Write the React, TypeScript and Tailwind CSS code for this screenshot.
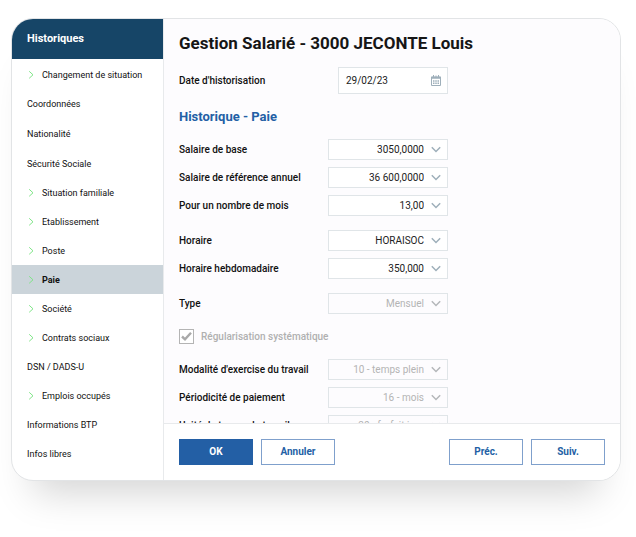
type MenuItem = {
  label: string;
  nested?: boolean;
  active?: boolean;
  spaced?: boolean;
};

const menu: MenuItem[] = [
  { label: "Changement de situation", nested: true },
  { label: "Coordonnées", spaced: true },
  { label: "Nationalité", spaced: true },
  { label: "Sécurité Sociale" },
  { label: "Situation familiale", nested: true },
  { label: "Etablissement", nested: true },
  { label: "Poste", nested: true },
  { label: "Paie", nested: true, active: true },
  { label: "Société", nested: true },
  { label: "Contrats sociaux", nested: true },
  { label: "DSN / DADS-U" },
  { label: "Emplois occupés", nested: true },
  { label: "Informations BTP" },
  { label: "Infos libres" },
];

const MenuLink = ({ label, nested, active, spaced }: MenuItem) => {
  return (
    <li className={spaced ? "mb-px" : ""}>
      <a
        href="#"
        className={`flex h-[29px] items-center pl-[15px] text-[9px] ${
          active ? "bg-[#cbd4da] font-bold text-[#111]" : "text-[#111]"
        }`}
      >
        {nested && (
          <svg
            className="mr-[5px] h-[10px] w-[10px] shrink-0"
            viewBox="0 0 10 10"
            fill="none"
            stroke="#7fe487"
          >
            <path d="M2.2 1.3 6 4.8 2.2 8.3" />
          </svg>
        )}
        {label}
      </a>
    </li>
  );
};

type FieldProps = {
  id: string;
  label: string;
  value: string;
  disabled?: boolean;
};

const SelectField = ({ id, label, value, disabled }: FieldProps) => {
  return (
    <div className="flex items-center justify-between">
      <label htmlFor={id} className="font-medium text-[#111]">
        {label}
      </label>
      <div className="relative">
        <select
          id={id}
          disabled={disabled}
          className={`block h-[21px] w-[120px] appearance-none border border-[#e0e5e8] pr-[23px] pl-2 text-right text-[10px] opacity-100 ${
            disabled ? "bg-[#fdfcfe] text-[#b4b4b4]" : "bg-white text-[#222]"
          }`}
        >
          <option>{value}</option>
        </select>
        <svg
          className={`pointer-events-none absolute top-[7px] right-[7px] h-[7px] w-[10px] ${
            disabled ? "text-[#b4b7ba]" : "text-[#9eafba]"
          }`}
          viewBox="0 0 10 7"
          fill="none"
          stroke="currentColor"
          strokeWidth="1.5"
        >
          <path d="M.8 1.3 5 5.5 9.2 1.3" />
        </svg>
      </div>
    </div>
  );
};

const CalendarIcon = () => {
  return (
    <svg
      className="pointer-events-none absolute top-[8px] right-[7px] h-[11px] w-[10px]"
      viewBox="0 0 10 11"
      fill="none"
      stroke="#9eafba"
    >
      <path d="M.5 2h9v8.5h-9z" />
      <path d="M0 2.8h10" strokeWidth="2" />
      <path d="M2.5 0v2.5M7.5 0v2.5M5 .5v2" />
      <path d="M2 6h6M2 8.2h6" strokeDasharray="1.5 .75" strokeWidth="1.4" />
    </svg>
  );
};

type ButtonProps = {
  label: string;
  primary?: boolean;
};

const Button = ({ label, primary }: ButtonProps) => {
  return (
    <button
      type="button"
      className={`h-[26px] w-[74px] border font-bold ${
        primary
          ? "border-[#235fa5] bg-[#235fa5] text-white"
          : "border-[#7fa0cc] bg-white text-[#235fa5]"
      }`}
    >
      {label}
    </button>
  );
};

const App = () => {
  return (
    <div className="bg-white pt-[18px] pr-[15px] pb-14 pl-[11px] font-['Roboto',sans-serif] text-[10px] leading-[14px]">
      <div className="flex overflow-hidden rounded-[22px] border border-[#e2e4e6] bg-white shadow-[0_34px_36px_-22px_rgba(0,0,0,0.17)]">
        <nav className="w-[152px] shrink-0 border-r border-[#e8eaec] pb-3">
          <h2 className="mb-px flex h-10 items-center bg-[#164567] pl-[15px] text-[11px] font-bold text-white">
            Historiques
          </h2>
          <ul>
            {menu.map((item) => (
              <MenuLink key={item.label} {...item} />
            ))}
          </ul>
        </nav>
        <main className="flex min-w-0 grow flex-col">
          <div className="h-0 grow overflow-hidden bg-[#fdfcfe] pt-[14px] pl-[15px]">
            <h1 className="text-[17px] leading-[20px] font-bold text-[#161616]">
              Gestion Salarié - 3000 JECONTE Louis
            </h1>
            <form className="w-[269px] max-w-full">
              <div className="mt-[14px] flex items-center justify-between">
                <label htmlFor="date" className="font-medium text-[#111]">
                  Date d'historisation
                </label>
                <div className="relative">
                  <input
                    id="date"
                    type="text"
                    defaultValue="29/02/23"
                    className="block h-[27px] w-[110px] border border-[#e0e5e8] bg-white pl-[7px] text-[10px] text-[#222]"
                  />
                  <CalendarIcon />
                </div>
              </div>
              <h2 className="mt-[15px] text-[13px] leading-[16px] font-bold text-[#235fa5]">
                Historique - Paie
              </h2>
              <div className="mt-[14px] flex flex-col gap-[7px]">
                <SelectField id="base" label="Salaire de base" value="3050,0000" />
                <SelectField id="annuel" label="Salaire de référence annuel" value="36 600,0000" />
                <SelectField id="mois" label="Pour un nombre de mois" value="13,00" />
              </div>
              <div className="mt-[14px] flex flex-col gap-[7px]">
                <SelectField id="horaire" label="Horaire" value="HORAISOC" />
                <SelectField id="hebdo" label="Horaire hebdomadaire" value="350,000" />
              </div>
              <div className="mt-[14px]">
                <SelectField id="type" label="Type" value="Mensuel" disabled />
              </div>
              <div className="mt-[15px] flex items-center gap-[7px]">
                <div className="relative">
                  <input
                    id="regul"
                    type="checkbox"
                    defaultChecked
                    disabled
                    className="block h-[15px] w-[15px] appearance-none border border-[#b4b4b4] bg-white"
                  />
                  <svg
                    className="pointer-events-none absolute top-[2px] left-[2px] h-[11px] w-[11px]"
                    viewBox="0 0 11 11"
                    fill="none"
                    stroke="#a9a9a9"
                    strokeWidth="2.4"
                  >
                    <path d="M1 5.5 4 8.3 10 1.8" />
                  </svg>
                </div>
                <label htmlFor="regul" className="font-medium text-[#b0b0b0]">
                  Régularisation systématique
                </label>
              </div>
              <div className="mt-[15px] flex flex-col gap-[7px]">
                <SelectField
                  id="modalite"
                  label="Modalité d'exercise du travail"
                  value="10 - temps plein"
                  disabled
                />
                <SelectField id="periodicite" label="Périodicité de paiement" value="16 - mois" disabled />
                <SelectField id="unite" label="Unité de temps de travail" value="20 - forfait jour" disabled />
              </div>
            </form>
          </div>
          <footer className="flex flex-wrap justify-between gap-2 border-t border-[#e8eaec] bg-white py-[15px] pr-[15px] pl-[15px]">
            <div className="flex gap-2">
              <Button label="OK" primary />
              <Button label="Annuler" />
            </div>
            <div className="flex gap-2">
              <Button label="Préc." />
              <Button label="Suiv." />
            </div>
          </footer>
        </main>
      </div>
    </div>
  );
};

export default App;
